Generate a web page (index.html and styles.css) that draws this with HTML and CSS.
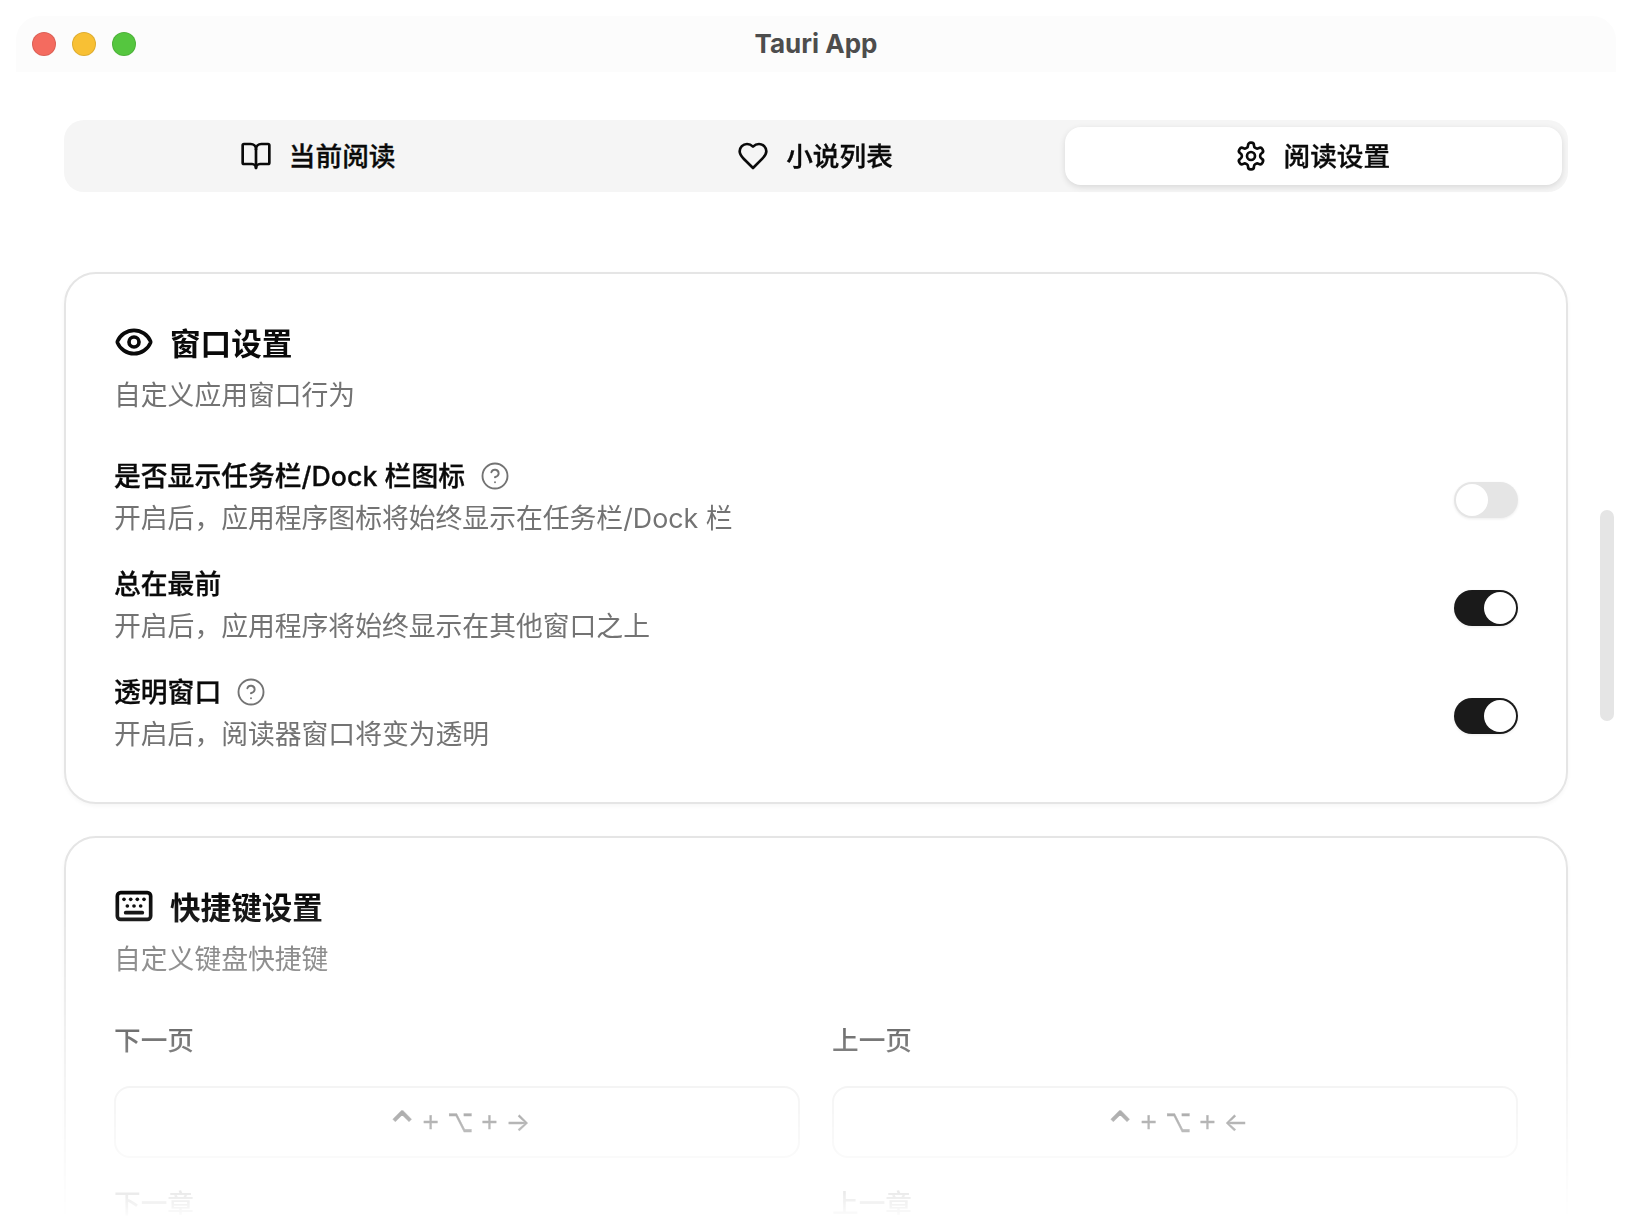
FILE: index.html
```html
<!DOCTYPE html>
<html lang="zh-CN">
<head>
<meta charset="utf-8">
<title>Tauri App</title>
<link rel="stylesheet" href="styles.css">
</head>
<body>
<div class="window">
  <header class="titlebar">
    <div class="lights">
      <span class="light light-red"></span>
      <span class="light light-yellow"></span>
      <span class="light light-green"></span>
    </div>
    <div class="title">Tauri App</div>
  </header>

  <main class="content">
    <nav class="tabs">
      <button class="tab">
        <svg class="tab-icon" viewBox="0 0 24 24"><path d="M12 7v14"/><path d="M3 18a1 1 0 0 1-1-1V4a1 1 0 0 1 1-1h5a4 4 0 0 1 4 4 4 4 0 0 1 4-4h5a1 1 0 0 1 1 1v13a1 1 0 0 1-1 1h-6a3 3 0 0 0-3 3 3 3 0 0 0-3-3z"/></svg>
        <span>当前阅读</span>
      </button>
      <button class="tab">
        <svg class="tab-icon" viewBox="0 0 24 24"><path d="M19 14c1.49-1.46 3-3.21 3-5.5A5.5 5.5 0 0 0 16.5 3c-1.76 0-3 .5-4.5 2-1.5-1.5-2.74-2-4.5-2A5.5 5.5 0 0 0 2 8.5c0 2.3 1.5 4.05 3 5.5l7 7Z"/></svg>
        <span>小说列表</span>
      </button>
      <button class="tab tab-active">
        <svg class="tab-icon" viewBox="0 0 24 24"><path d="M12.22 2h-.44a2 2 0 0 0-2 2v.18a2 2 0 0 1-1 1.73l-.43.25a2 2 0 0 1-2 0l-.15-.08a2 2 0 0 0-2.73.73l-.22.38a2 2 0 0 0 .73 2.73l.15.1a2 2 0 0 1 1 1.72v.51a2 2 0 0 1-1 1.74l-.15.09a2 2 0 0 0-.73 2.73l.22.38a2 2 0 0 0 2.73.73l.15-.08a2 2 0 0 1 2 0l.43.25a2 2 0 0 1 1 1.73V20a2 2 0 0 0 2 2h.44a2 2 0 0 0 2-2v-.18a2 2 0 0 1 1-1.73l.43-.25a2 2 0 0 1 2 0l.15.08a2 2 0 0 0 2.73-.73l.22-.39a2 2 0 0 0-.73-2.73l-.15-.08a2 2 0 0 1-1-1.74v-.5a2 2 0 0 1 1-1.74l.15-.09a2 2 0 0 0 .73-2.73l-.22-.38a2 2 0 0 0-2.73-.73l-.15.08a2 2 0 0 1-2 0l-.43-.25a2 2 0 0 1-1-1.73V4a2 2 0 0 0-2-2z"/><circle cx="12" cy="12" r="3"/></svg>
        <span>阅读设置</span>
      </button>
    </nav>

    <section class="card">
      <h2 class="card-title">
        <svg class="card-icon" viewBox="0 0 24 24"><path d="M2.06 12.35a1 1 0 0 1 0-.7 10.75 10.75 0 0 1 19.88 0 1 1 0 0 1 0 .7 10.75 10.75 0 0 1-19.88 0"/><circle cx="12" cy="12" r="3"/></svg>
        <span>窗口设置</span>
      </h2>
      <p class="card-desc">自定义应用窗口行为</p>

      <div class="rows">
        <div class="row">
          <div class="row-text">
            <div class="row-label">
              <span>是否显示任务栏/Dock 栏图标</span>
              <svg class="help" viewBox="0 0 24 24"><circle cx="12" cy="12" r="10"/><path d="M9.09 9a3 3 0 0 1 5.83 1c0 2-3 3-3 3"/><path d="M12 17h.01"/></svg>
            </div>
            <div class="row-desc">开启后，应用程序图标将始终显示在任务栏/Dock 栏</div>
          </div>
          <span class="switch"><span class="thumb"></span></span>
        </div>
        <div class="row">
          <div class="row-text">
            <div class="row-label"><span>总在最前</span></div>
            <div class="row-desc">开启后，应用程序将始终显示在其他窗口之上</div>
          </div>
          <span class="switch switch-on"><span class="thumb"></span></span>
        </div>
        <div class="row">
          <div class="row-text">
            <div class="row-label">
              <span>透明窗口</span>
              <svg class="help" viewBox="0 0 24 24"><circle cx="12" cy="12" r="10"/><path d="M9.09 9a3 3 0 0 1 5.83 1c0 2-3 3-3 3"/><path d="M12 17h.01"/></svg>
            </div>
            <div class="row-desc">开启后，阅读器窗口将变为透明</div>
          </div>
          <span class="switch switch-on"><span class="thumb"></span></span>
        </div>
      </div>
    </section>

    <section class="card">
      <h2 class="card-title">
        <svg class="card-icon" viewBox="0 0 24 24"><path d="M10 8h.01"/><path d="M12 12h.01"/><path d="M14 8h.01"/><path d="M16 12h.01"/><path d="M18 8h.01"/><path d="M6 8h.01"/><path d="M7 16h10"/><path d="M8 12h.01"/><rect x="2" y="4" width="20" height="16" rx="2"/></svg>
        <span>快捷键设置</span>
      </h2>
      <p class="card-desc">自定义键盘快捷键</p>

      <div class="keys">
        <div class="key-field">
          <div class="key-label">下一页</div>
          <div class="key-box"><span class="sym sym-ctrl">⌃</span><span class="sym">+</span><span class="sym sym-opt">⌥</span><span class="sym">+</span><span class="sym sym-arrow">→</span></div>
        </div>
        <div class="key-field">
          <div class="key-label">上一页</div>
          <div class="key-box"><span class="sym sym-ctrl">⌃</span><span class="sym">+</span><span class="sym sym-opt">⌥</span><span class="sym">+</span><span class="sym sym-arrow">←</span></div>
        </div>
        <div class="key-field">
          <div class="key-label">下一章</div>
        </div>
        <div class="key-field">
          <div class="key-label">上一章</div>
        </div>
      </div>
    </section>

    <div class="scrollbar"></div>
  </main>
</div>
</body>
</html>
```

FILE: styles.css
```css
* { box-sizing: border-box; }

html, body {
  margin: 0;
  height: 100%;
  background: #fff;
}

body {
  font-family: "Inter", "Noto Sans CJK SC", "Noto Sans", sans-serif;
  color: #0a0a0a;
}

.window {
  width: 1632px;
  height: 1232px;
  padding-top: 16px;
  overflow: hidden;
  display: flex;
  flex-direction: column;
}

.titlebar {
  flex: none;
  position: relative;
  height: 56px;
  margin: 0 16px;
  display: flex;
  align-items: center;
  justify-content: center;
  background: #fcfcfc;
  border-radius: 24px 24px 0 0;
}

.lights {
  position: absolute;
  left: 16px;
  top: 16px;
  display: flex;
  gap: 16px;
}

.light {
  width: 24px;
  height: 24px;
  border-radius: 50%;
  border: 1px solid rgba(0, 0, 0, 0.1);
}
.light-red { background: #f46b5f; }
.light-yellow { background: #f8c034; }
.light-green { background: #55c63f; }

.title {
  font-size: 26px;
  font-weight: 700;
  color: #4d4d4d;
  line-height: 56px;
}

.content {
  position: relative;
  flex: 1;
  min-height: 0;
  padding: 48px 64px 0;
  overflow: hidden;
  -webkit-mask-image: linear-gradient(to bottom, #000 0, #000 824px, transparent 1148px);
  mask-image: linear-gradient(to bottom, #000 0, #000 824px, transparent 1148px);
}

.tabs {
  display: grid;
  grid-template-columns: repeat(3, 1fr);
  height: 72px;
  padding: 7px 6px;
  background: #f5f5f5;
  border-radius: 20px;
  margin-bottom: 80px;
}

.tab {
  display: flex;
  align-items: center;
  justify-content: center;
  gap: 17px;
  border: 0;
  background: transparent;
  border-radius: 16px;
  font: 500 26.67px/32px "Noto Sans CJK SC", sans-serif;
  -webkit-text-stroke: 0.3px currentColor;
  color: #0a0a0a;
  padding: 0;
}

.tab span {
  margin-top: -2px;
  margin-right: 2px;
}

.tab-active {
  background: #fff;
  box-shadow: 0 2px 6px rgba(0, 0, 0, 0.12);
}

.tab-icon, .card-icon, .help {
  fill: none;
  stroke: currentColor;
  stroke-linecap: round;
  stroke-linejoin: round;
  flex: none;
}

.tab-icon {
  width: 32px;
  height: 32px;
  stroke-width: 2;
}

.card {
  border: 2px solid #e5e5e5;
  border-radius: 32px;
  padding: 48px 48px 40px;
  background: #fff;
  box-shadow: 0 2px 4px rgba(0, 0, 0, 0.04);
  margin-bottom: 32px;
}

.card-title {
  display: flex;
  align-items: center;
  gap: 16px;
  margin: 0;
  font: 700 30.6px/40px "Noto Sans CJK SC", sans-serif;
  color: #0a0a0a;
}

.card-icon {
  width: 40px;
  height: 40px;
  stroke-width: 2.2;
}

.card-desc {
  margin: 12px 0 0;
  font: 400 26.8px/40px "Noto Sans CJK SC", sans-serif;
  color: #737373;
}

.rows {
  display: flex;
  flex-direction: column;
  gap: 16px;
  margin-top: 40px;
}

.row {
  display: flex;
  align-items: center;
  justify-content: space-between;
  height: 92px;
}

.row-text {
  align-self: flex-start;
  padding-top: 2px;
}

.row-label {
  display: flex;
  align-items: center;
  gap: 15px;
  font: 500 26.8px/40px "Inter", "Noto Sans CJK SC", sans-serif;
  -webkit-text-stroke: 0.3px currentColor;
}

.help {
  width: 30px;
  height: 30px;
  stroke-width: 1.5;
  color: #737373;
}

.row-desc {
  margin-top: 2px;
  font: 400 26.8px/40px "Inter", "Noto Sans CJK SC", sans-serif;
  color: #737373;
}

.switch {
  position: relative;
  flex: none;
  width: 64px;
  height: 36px;
  border-radius: 18px;
  background: #e5e5e5;
  box-shadow: 0 1px 3px rgba(0, 0, 0, 0.08);
}

.thumb {
  position: absolute;
  top: 2px;
  left: 2px;
  width: 32px;
  height: 32px;
  border-radius: 50%;
  background: #fff;
}

.switch-on { background: #1a1a1a; }
.switch-on .thumb { left: 30px; }

.keys {
  display: grid;
  grid-template-columns: 1fr 1fr;
  gap: 24px 32px;
  margin-top: 41px;
}

.key-label {
  font: 500 26.67px/40px "Noto Sans CJK SC", sans-serif;
  color: #0a0a0a;
}

.key-box {
  height: 72px;
  margin-top: 27px;
  display: flex;
  align-items: center;
  justify-content: center;
  gap: 8px;
  border: 2px solid #e5e5e5;
  border-radius: 16px;
  color: #0a0a0a;
}

.sym {
  font: 400 28px/1 "Liberation Sans", sans-serif;
  -webkit-text-stroke: 0.3px currentColor;
}

.sym-ctrl {
  font: 400 44px/1 "DejaVu Sans", sans-serif;
  margin: 12px -6px 0 0;
}

.sym-opt {
  font: 400 28px/1 "DejaVu Sans", sans-serif;
  transform: scale(0.8, 1.15);
  margin: 0 -3px;
}

.sym-arrow { font: 400 26px/1 "Inter", sans-serif; }

.scrollbar {
  position: absolute;
  right: 18px;
  top: 438px;
  width: 14px;
  height: 211px;
  border-radius: 7px;
  background: #e5e5e5;
}
```
